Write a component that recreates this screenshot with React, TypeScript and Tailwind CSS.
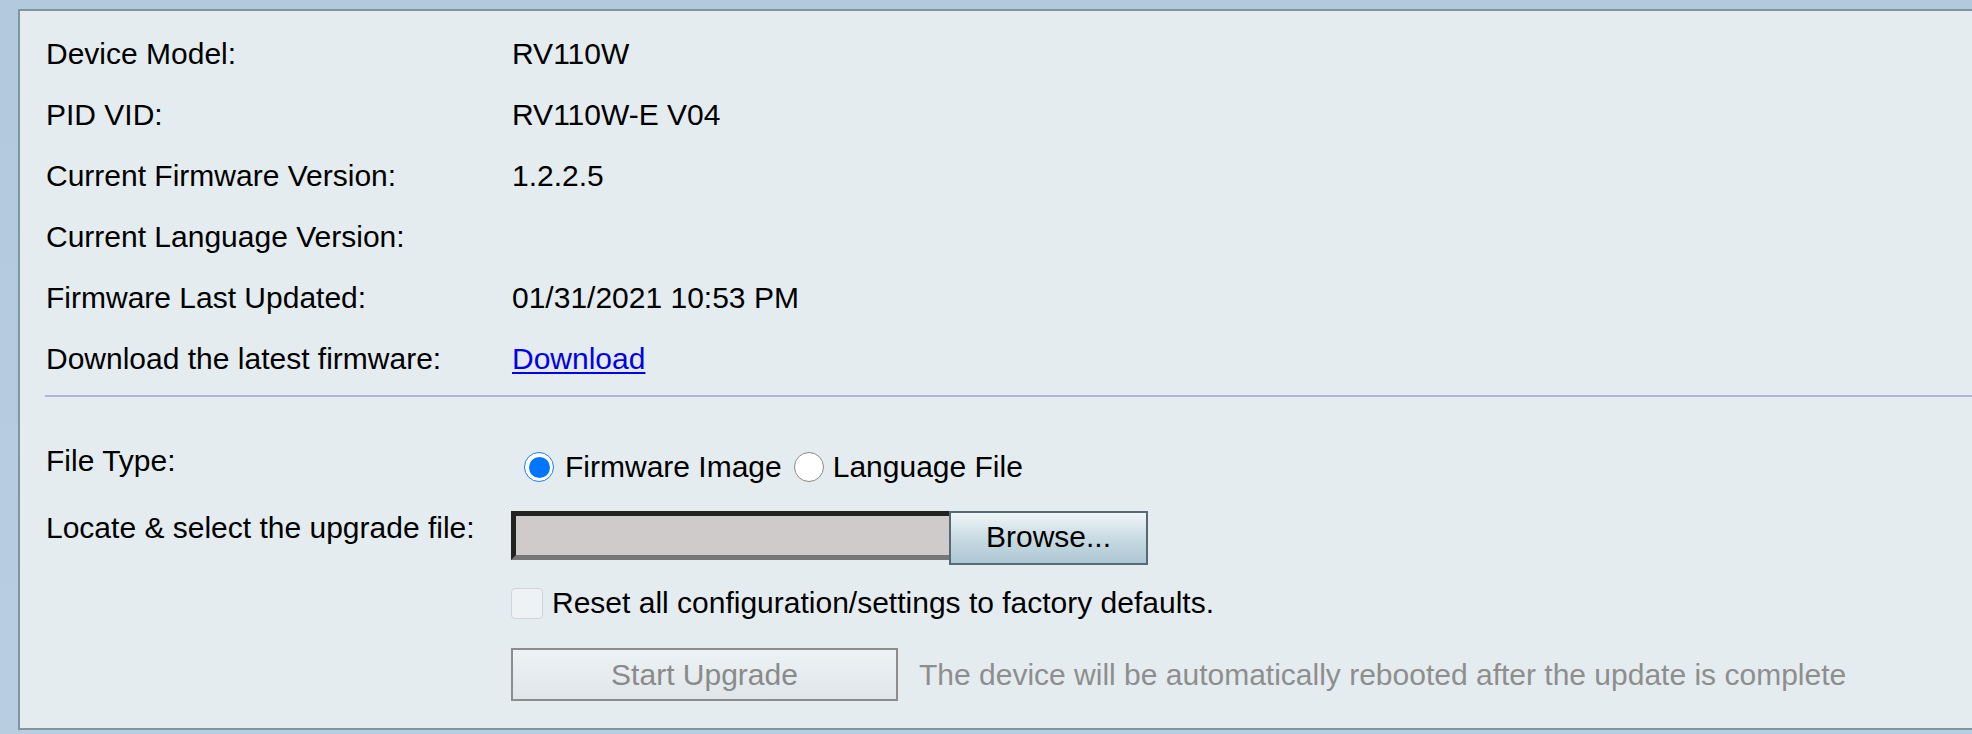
import React from 'react';

const font = { fontFamily: '"Liberation Sans", Arial, sans-serif' };

const info: [string, React.ReactNode][] = [
  ['Device Model:', 'RV110W'],
  ['PID VID:', 'RV110W-E V04'],
  ['Current Firmware Version:', '1.2.2.5'],
  ['Current Language Version:', ''],
  ['Firmware Last Updated:', '01/31/2021 10:53 PM'],
  [
    'Download the latest firmware:',
    <a href="#" className="text-[#0000ee] underline decoration-2 underline-offset-[3px]">
      Download
    </a>,
  ],
];

const Radio: React.FC<{ checked?: boolean; className?: string }> = ({ checked, className = '' }) =>
  checked ? (
    <span
      className={`flex h-[30px] w-[30px] shrink-0 items-center justify-center rounded-full border-[1.5px] border-[#1a7fef] bg-white ${className}`}
    >
      <span className="h-[21px] w-[21px] rounded-full bg-[#0075ff]" />
    </span>
  ) : (
    <span className={`block h-[30px] w-[30px] shrink-0 rounded-full border-[1.5px] border-[#8a8a8a] bg-white ${className}`} />
  );

export default function App() {
  return (
    <div
      className="h-[734px] w-full overflow-hidden bg-gradient-to-b from-[#b2c9de] to-[#b9cde1] pt-[9px] pl-[18px] pb-[4px]"
      style={font}
    >
      <div className="h-[721px] border-y-2 border-l-2 border-[#7f959f] bg-[#e4ecf0] pt-[12px] text-[30px] leading-[34px] text-black">
        {/* device info */}
        <div className="pl-[26px]">
          {info.map(([label, value]) => (
            <div key={label} className="flex h-[61px] items-center">
              <div className="w-[466px] shrink-0">{label}</div>
              <div>{value}</div>
            </div>
          ))}
        </div>

        <div className="mt-[6px] ml-[25px] h-[2px] bg-[#b3b3e2]" />

        <div className="pl-[26px]">
          {/* file type */}
          <div className="mt-[40px] flex h-[60px] items-center">
            <div className="mb-[12px] w-[465px] shrink-0">File Type:</div>
            <div className="ml-[13px] flex items-center">
              <Radio checked />
              <span className="ml-[11px]">Firmware Image</span>
              <Radio className="ml-[12px]" />
              <span className="ml-[9px]">Language File</span>
            </div>
          </div>

          {/* upgrade file */}
          <div className="mt-[14px] flex items-start">
            <div className="w-[465px] shrink-0">Locate &amp; select the upgrade file:</div>
            <div className="flex items-start">
              <div className="h-[49px] w-[438px] border-t-[5px] border-l-[5px] border-b-[5px] border-t-[#222] border-l-[#222] border-b-[#777] bg-[#cfcbca]" />
              <button className="flex h-[54px] w-[199px] items-center justify-center border-2 border-[#566a74] bg-gradient-to-b from-[#f0f6f9] via-[#c9dbe3] to-[#adc7d3] pb-[2px]">
                Browse...
              </button>
            </div>
          </div>

          {/* reset checkbox */}
          <div className="mt-[21px] flex h-[34px] items-center pl-[465px]">
            <span className="h-[31px] w-[32px] shrink-0 rounded-[4px] border border-[#cdd6dc] bg-[#eef2f4]" />
            <span className="ml-[9px]">Reset all configuration/settings to factory defaults.</span>
          </div>

          {/* start upgrade */}
          <div className="mt-[28px] flex items-center pl-[465px]">
            <button className="h-[53px] w-[387px] border-2 border-[#8c8c8c] bg-gradient-to-b from-[#eef2f5] to-[#dfe6ea] text-[#8a8a8a]">
              Start Upgrade
            </button>
            <span className="ml-[21px] text-[#8e8e8e]">
              The device will be automatically rebooted after the update is complete
            </span>
          </div>
        </div>
      </div>
    </div>
  );
}
